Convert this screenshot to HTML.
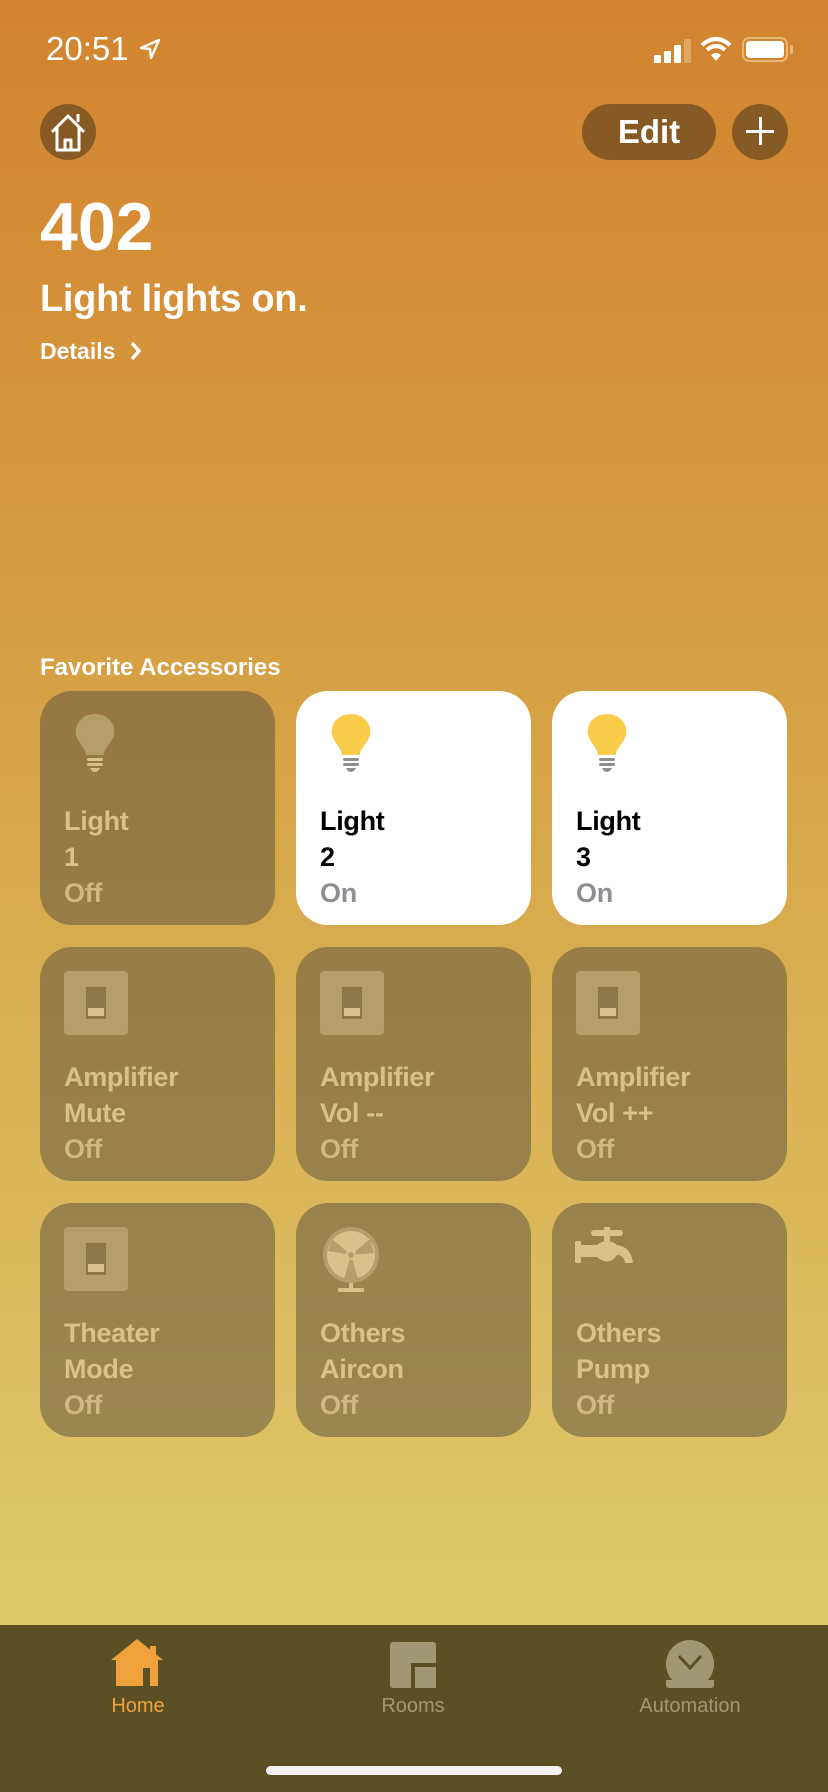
<!DOCTYPE html>
<html><head><meta charset="utf-8"><style>
*{margin:0;padding:0;box-sizing:border-box}
body{width:828px;height:1792px;overflow:hidden;font-family:"Liberation Sans",sans-serif;position:relative;
background:linear-gradient(180deg,#d3842f 0%,#d59a3f 30%,#d9b253 60%,#dec86c 90%,#dec86c 100%);}
.abs{position:absolute}
.w{color:#fff}
.tile{position:absolute;width:235px;height:234px;border-radius:32px;background:rgba(85,78,62,0.5)}
.tile.on{background:#fff}
.tile .t{position:absolute;left:24px;top:112px;font-size:27px;font-weight:bold;line-height:36px;color:#d6c28a;letter-spacing:-0.3px}
.tile .t .s{color:#cdb981}
.tile.on .t{color:#000}
.tile.on .t .s{color:#8e8e93}
.sw{position:absolute;left:24px;top:24px;width:64px;height:64px;border-radius:4px;background:#b49f6b}
.sw i{position:absolute;left:22px;top:16px;width:20px;height:32px;background:#8b7848}
.sw i b{position:absolute;left:2px;bottom:3px;width:16px;height:8px;background:#d6c38c}
</style></head><body>
<div class="abs w" style="left:46px;top:30px;font-size:33px;">20:51</div>
<svg class="abs" style="left:138px;top:37px" width="24" height="24" viewBox="0 0 24 24"><path d="M21 3 L3 11 L12 12 L13 21 Z" fill="none" stroke="#fff" stroke-width="2.4" stroke-linejoin="round"/></svg>
<div class="abs" style="left:654px;top:55px;width:7px;height:8px;background:#fff;border-radius:1px"></div>
<div class="abs" style="left:664px;top:51px;width:7px;height:12px;background:#fff;border-radius:1px"></div>
<div class="abs" style="left:674px;top:45px;width:7px;height:18px;background:#fff;border-radius:1px"></div>
<div class="abs" style="left:684px;top:39px;width:7px;height:24px;background:#e0a860;border-radius:1px"></div>
<svg class="abs" style="left:700px;top:36px" width="32" height="26" viewBox="0 0 32 26"><path d="M2 9 Q16 -3 30 9" fill="none" stroke="#fff" stroke-width="4"/><path d="M7 14 Q16 6 25 14" fill="none" stroke="#fff" stroke-width="4"/><path d="M11 19 L16 25 L21 19 Q16 15 11 19Z" fill="#fff"/></svg>
<div class="abs" style="left:742px;top:37px;width:46px;height:25px;border:2px solid #e8b877;border-radius:7px;padding:2px"><div style="width:100%;height:100%;background:#fff;border-radius:4px"></div></div>
<div class="abs" style="left:790px;top:45px;width:3px;height:9px;background:#e8b877;border-radius:2px"></div>

<div class="abs" style="left:40px;top:104px;width:56px;height:56px;border-radius:50%;background:#875a24"></div>
<svg class="abs" style="left:48px;top:110px" width="40" height="44" viewBox="0 0 40 44"><path d="M4 22 L20 6 L36 22 M9 18 V40 H31 V18 M17 40 V30 H23 V40 M30 12 V4" fill="none" stroke="#fff" stroke-width="3" stroke-linejoin="round"/></svg>
<div class="abs w" style="left:582px;top:104px;width:134px;height:56px;border-radius:28px;background:#875a24;font-size:33px;font-weight:bold;text-align:center;line-height:56px">Edit</div>
<div class="abs" style="left:732px;top:104px;width:56px;height:56px;border-radius:50%;background:#875a24"></div>
<div class="abs" style="left:746px;top:130px;width:28px;height:3px;background:#fff"></div>
<div class="abs" style="left:759px;top:117px;width:3px;height:28px;background:#fff"></div>

<div class="abs w" style="left:40px;top:188px;font-size:68px;font-weight:bold">402</div>
<div class="abs w" style="left:40px;top:278px;font-size:38px;font-weight:bold;letter-spacing:-0.3px">Light lights on.</div>
<div class="abs w" style="left:40px;top:338px;font-size:23px;font-weight:bold">Details</div>
<svg class="abs" style="left:129px;top:340px" width="14" height="22" viewBox="0 0 14 22"><path d="M3 3 L10 11 L3 19" fill="none" stroke="#fff" stroke-width="3.5"/></svg>
<div class="abs w" style="left:40px;top:654px;font-size:24px;font-weight:bold">Favorite Accessories</div>

<div class="tile" style="left:40px;top:691px"><svg class="abs" style="left:32px;top:22px" width="46" height="62" viewBox="0 0 46 62"><path d="M23 1 C10 1 2 11 4 22 C6 30 14 35 14 42 H32 C32 35 40 30 42 22 C44 11 36 1 23 1Z" fill="#b49f6b"/><g fill="#d6c38c"><rect x="15" y="45" width="16" height="3" rx="1.5"/><rect x="15" y="50" width="16" height="3" rx="1.5"/><path d="M18 55 H28 Q26 59 23 59 Q20 59 18 55Z"/></g></svg><div class="t">Light<br>1<br><span class="s">Off</span></div></div>
<div class="tile on" style="left:296px;top:691px"><svg class="abs" style="left:32px;top:22px" width="46" height="62" viewBox="0 0 46 62"><path d="M23 1 C10 1 2 11 4 22 C6 30 14 35 14 42 H32 C32 35 40 30 42 22 C44 11 36 1 23 1Z" fill="#f8cc48"/><g fill="#8e8e93"><rect x="15" y="45" width="16" height="3" rx="1.5"/><rect x="15" y="50" width="16" height="3" rx="1.5"/><path d="M18 55 H28 Q26 59 23 59 Q20 59 18 55Z"/></g></svg><div class="t">Light<br>2<br><span class="s">On</span></div></div>
<div class="tile on" style="left:552px;top:691px"><svg class="abs" style="left:32px;top:22px" width="46" height="62" viewBox="0 0 46 62"><path d="M23 1 C10 1 2 11 4 22 C6 30 14 35 14 42 H32 C32 35 40 30 42 22 C44 11 36 1 23 1Z" fill="#f8cc48"/><g fill="#8e8e93"><rect x="15" y="45" width="16" height="3" rx="1.5"/><rect x="15" y="50" width="16" height="3" rx="1.5"/><path d="M18 55 H28 Q26 59 23 59 Q20 59 18 55Z"/></g></svg><div class="t">Light<br>3<br><span class="s">On</span></div></div>

<div class="tile" style="left:40px;top:947px"><div class="sw"><i><b></b></i></div><div class="t">Amplifier<br>Mute<br><span class="s">Off</span></div></div>
<div class="tile" style="left:296px;top:947px"><div class="sw"><i><b></b></i></div><div class="t">Amplifier<br>Vol --<br><span class="s">Off</span></div></div>
<div class="tile" style="left:552px;top:947px"><div class="sw"><i><b></b></i></div><div class="t">Amplifier<br>Vol ++<br><span class="s">Off</span></div></div>

<div class="tile" style="left:40px;top:1203px"><div class="sw"><i><b></b></i></div><div class="t">Theater<br>Mode<br><span class="s">Off</span></div></div>
<div class="tile" style="left:296px;top:1203px"><svg class="abs" style="left:26px;top:24px" width="58" height="66" viewBox="0 0 58 66"><circle cx="29" cy="28" r="28" fill="#b49f6b"/><circle cx="29" cy="28" r="24" fill="#d6c38c"/><g fill="#b49f6b"><path d="M29 28 L10 12 L6 24Z"/><path d="M29 28 L48 12 L52 26Z"/><path d="M29 28 L22 52 L36 52Z"/></g><circle cx="29" cy="28" r="4" fill="#b49f6b" stroke="#d6c38c" stroke-width="2"/><rect x="27" y="56" width="4" height="6" fill="#d6c38c"/><rect x="16" y="61" width="26" height="4" rx="1" fill="#d6c38c"/></svg><div class="t">Others<br>Aircon<br><span class="s">Off</span></div></div>
<div class="tile" style="left:552px;top:1203px"><svg class="abs" style="left:23px;top:24px" width="66" height="42" viewBox="0 0 66 42" fill="#d6c38c"><rect x="0" y="14" width="6" height="22" rx="1"/><rect x="16" y="3" width="32" height="6" rx="3"/><rect x="29" y="0" width="6" height="14"/><path d="M6 18 H22 Q32 10 42 18 Q56 20 58 36 H50 Q49 28 42 28 Q34 40 22 30 H6Z"/></svg><div class="t">Others<br>Pump<br><span class="s">Off</span></div></div>

<div class="abs" style="left:0;top:1625px;width:828px;height:167px;background:#5a5024"></div>
<svg class="abs" style="left:110px;top:1638px" width="54" height="50" viewBox="0 0 54 50"><path d="M27 1 L53 22 H48 V48 H6 V22 H1Z" fill="#efa23b"/><rect x="40" y="8" width="6" height="12" fill="#efa23b"/><rect x="33" y="30" width="7" height="18" fill="#5a5024"/></svg>
<div class="abs" style="left:100px;top:1695px;width:76px;text-align:center;font-size:20px;color:#efa23b">Home</div>
<div class="abs" style="left:390px;top:1642px;width:46px;height:46px;background:#a09873;border-radius:3px"></div>
<div class="abs" style="left:411px;top:1663px;width:25px;height:25px;border-left:4px solid #5a5024;border-top:4px solid #5a5024;background:#a09873"></div>
<div class="abs" style="left:363px;top:1695px;width:100px;text-align:center;font-size:20px;color:#a09873">Rooms</div>
<div class="abs" style="left:666px;top:1640px;width:48px;height:48px;border-radius:50%;background:#a09873"></div>
<div class="abs" style="left:666px;top:1680px;width:48px;height:8px;background:#a09873;border-radius:0 0 3px 3px"></div>
<svg class="abs" style="left:676px;top:1650px" width="28" height="24" viewBox="0 0 28 24"><path d="M3 6 L14 18 L25 6" fill="none" stroke="#5a5024" stroke-width="3"/></svg>
<div class="abs" style="left:610px;top:1695px;width:160px;text-align:center;font-size:20px;color:#a09873">Automation</div>
<div class="abs" style="left:266px;top:1766px;width:296px;height:9px;border-radius:5px;background:#f2f2f2"></div>
</body></html>
